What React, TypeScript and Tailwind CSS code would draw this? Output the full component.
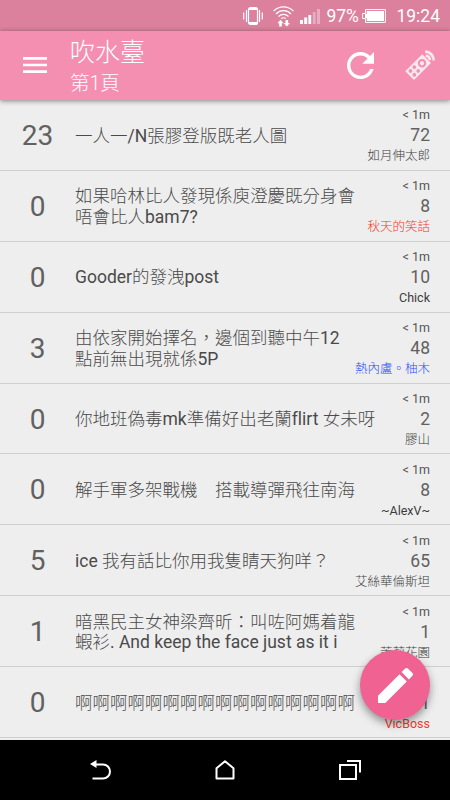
import React from 'react'

type Post = {
  score: number
  title: string[]
  replies: number
  author: string
  gender?: 'f' | 'm'
}

const posts: Post[] = [
  { score: 23, title: ['一人一/N張膠登版既老人圖'], replies: 72, author: '如月伸太郎' },
  { score: 0, title: ['如果哈林比人發現係庾澄慶既分身會', '唔會比人bam7?'], replies: 8, author: '秋天的笑話', gender: 'f' },
  { score: 0, title: ['Gooder的發洩post'], replies: 10, author: 'Chick' },
  { score: 3, title: ['由依家開始擇名，邊個到聽中午12', '點前無出現就係5P'], replies: 48, author: '熱內盧。柚木', gender: 'm' },
  { score: 0, title: ['你地班偽毒mk準備好出老蘭flirt 女未呀'], replies: 2, author: '膠山' },
  { score: 0, title: ['解手軍多架戰機　搭載導彈飛往南海'], replies: 8, author: '~AlexV~' },
  { score: 5, title: ['ice 我有話比你用我隻睛天狗咩？'], replies: 65, author: '艾絲華倫斯坦' },
  { score: 1, title: ['暗黑民主女神梁齊昕：叫咗阿媽着龍', '蝦衫. And keep the face just as it i'], replies: 1, author: '茉莉花園' },
  { score: 0, title: ['啊啊啊啊啊啊啊啊啊啊啊啊啊啊啊啊'], replies: 1, author: 'VicBoss', gender: 'f' },
]

const authorColor = (gender?: 'f' | 'm') => {
  if (gender === 'f') return 'text-[#f03a2c]'
  if (gender === 'm') return 'text-[#2f4fff]'
  return 'text-[#3c3c3c]'
}

const StatusBar = () => (
  <div className="flex h-[31px] shrink-0 items-center justify-end bg-[#db819e] pr-[10px] pt-px text-white">
    <svg className="mr-[10px] h-5 w-5" viewBox="0 0 20 20" fill="none" stroke="currentColor">
      <rect x="5.5" y="1.5" width="9" height="17" rx="2" strokeWidth="1.2" />
      <path d="M6 2.8h8M6 17h8" strokeWidth="2.2" />
      <path d="M3.5 4v12M16.500 4v12" strokeWidth="1.2" />
      <path d="M.7 6.5v7M19.3 6.5v7" strokeWidth="1.2" />
    </svg>
    <svg className="mr-[6px] h-[21px] w-[21px]" viewBox="0 0 21 21" fill="none" stroke="currentColor">
      <path d="M.6 5.2C6-.6 15-.6 20.4 5.2M3 8c4.2-4.4 10.8-4.4 15 0M5.500 10.500c2.900-2.800 7.100-2.800 10 0M8.200 12.600c1.500-1.100 3.100-1.100 4.600 0" strokeWidth="1.2" />
      <path d="M7.500 13.800l3.100 3.400H8.800v3.300H6.200v-3.300H4.400zM13.800 20.500l-3.100-3.400h1.800v-3h2.600v3h1.800z" fill="currentColor" stroke="none" />
    </svg>
    <svg className="mr-[6px] h-4 w-5" viewBox="0 0 20 16" fill="currentColor">
      <path d="M0 12h3v4H0zM4.200 9.500h3V16h-3zM8.400 7h2.800v9H8.400z" />
      <path d="M12.800 4h2.800v12h-2.800zM17 1h3v15h-3z" opacity=".35" />
    </svg>
    <span className="w-[32px] whitespace-nowrap text-[17.500px] leading-5">97%</span>
    <svg className="ml-[4px] mr-[10px] h-[14px] w-6" viewBox="0 0 24 14">
      <path d="M3.500.6H23.400v12.800H3.500V9.500H.6v-5h2.900z" fill="none" stroke="currentColor" strokeWidth="1" />
      <path d="M4.700 2h17.300v10H4.700V9H3V5h1.700z" fill="currentColor" />
    </svg>
    <span className="text-[17.500px] leading-5">19:24</span>
  </div>
)

const AppBar = () => (
  <header className="relative z-10 flex h-[69px] shrink-0 items-center bg-[#f48fb1] pl-[23px] pr-[14px] text-white shadow-[0_1px_5px_rgba(0,0,0,0.45)]">
    <svg className="mr-[23px] mb-[2px] h-4 w-6" viewBox="3 6 18 12" fill="currentColor">
      <path d="M3 18h18v-2H3v2zm0-5h18v-2H3v2zm0-7v2h18V6H3z" />
    </svg>
    <div className="flex-1 pt-[6px] font-light">
      <h1 className="text-[25px] leading-[30px]">吹水臺</h1>
      <p className="text-[19.500px] leading-[31px]">第1頁</p>
    </div>
    <svg className="mr-[31px] h-[27px] w-[27px]" viewBox="4 4 16 16" fill="currentColor">
      <path d="M17.650 6.350C16.200 4.900 14.210 4 12 4c-4.420 0-7.990 3.580-7.990 8s3.570 8 7.990 8c3.730 0 6.840-2.550 7.730-6h-2.080c-.820 2.330-3.040 4-5.650 4-3.310 0-6-2.690-6-6s2.690-6 6-6c1.660 0 3.140.690 4.220 1.780L13 11h7V4l-2.350 2.350z" />
    </svg>
    <svg className="h-[31px] w-[31px]" viewBox="0 0 31 31">
      <g transform="translate(.3 21.300) rotate(-45)">
        <rect width="24" height="12.300" fill="#fde8ef" />
        <g fill="#f48fb1">
          <circle cx="3.900" cy="3.400" r="1.850" />
          <circle cx="3.900" cy="8.900" r="1.850" />
          <circle cx="9.300" cy="3.400" r="1.850" />
          <circle cx="9.300" cy="8.900" r="1.850" />
          <circle cx="17.500" cy="6.150" r="4.200" />
        </g>
        <circle cx="17.500" cy="6.150" r="2.200" fill="#fde8ef" />
      </g>
      <path d="M20.700 5.600a5 5 0 0 1 4.300 4.600M20.200 1.600a8.800 8.800 0 0 1 8.600 8.800" fill="none" stroke="#fde8ef" strokeWidth="2.600" />
    </svg>
  </header>
)

const PostRow = ({ post }: { post: Post }) => (
  <li className="flex h-[70.900px] items-center border-b border-[#cfcfcf] pr-5 pt-[2px] text-[#616161]">
    <div className="w-[75px] shrink-0 text-center text-[28px] leading-8">{post.score}</div>
    <div className="min-w-0 flex-1 whitespace-nowrap text-[17.500px] leading-[20.500px] text-[#4a4a4a]">
      {post.title.map((line) => (
        <div key={line}>{line}</div>
      ))}
    </div>
    <div className="shrink-0 text-right">
      <div className="text-[12.500px] leading-5 text-[#555]">&lt; 1m</div>
      <div className="text-[17.500px] leading-[21px]">{post.replies}</div>
      <div className={`text-[12.500px] leading-5 ${authorColor(post.gender)}`}>{post.author}</div>
    </div>
  </li>
)

const NavBar = () => (
  <nav className="flex h-[60px] shrink-0 items-center justify-between bg-black pl-[90px] pr-[89px] text-white">
    <svg className="h-5 w-[21px]" viewBox="0 0 21 20" fill="none" stroke="currentColor" strokeWidth="2">
      <path d="M5 4.500h8a7 7 0 0 1 0 14H2.500" />
      <path d="M0 4L6.500 0v8z" fill="currentColor" stroke="none" />
    </svg>
    <svg className="h-5 w-5" viewBox="0 0 20 20" fill="none" stroke="currentColor" strokeWidth="2" strokeLinejoin="round">
      <path d="M1.500 18.500V8.200L10 1.300l8.500 6.900v10.300z" />
    </svg>
    <svg className="h-5 w-[22px]" viewBox="0 0 22 20" fill="none" stroke="currentColor" strokeWidth="2">
      <rect x="1" y="5" width="16" height="14" />
      <path d="M8 1h13v11.500" />
    </svg>
  </nav>
)

const App = () => {
  return (
    <div className="relative flex h-[800px] w-[450px] flex-col overflow-hidden bg-[#eee] font-[Roboto,'Noto_Sans_CJK_TC_Light','Noto_Sans_CJK_TC',sans-serif] [font-variant-ligatures:none]">
      <StatusBar />
      <AppBar />
      <ul className="min-h-0 flex-1 overflow-hidden">
        {posts.map((post) => (
          <PostRow key={post.title[0]} post={post} />
        ))}
      </ul>
      <NavBar />
      <button className="absolute bottom-[80px] right-5 flex h-[70px] w-[70px] items-center justify-center rounded-full bg-[#f06292] text-white shadow-[0_4px_9px_rgba(0,0,0,0.4)]">
        <svg className="h-[35px] w-[35px]" viewBox="3 3 18 18" fill="currentColor">
          <path d="M3 17.250V21h3.750L17.810 9.940l-3.750-3.750L3 17.250zM20.710 7.040c.390-.390.390-1.020 0-1.410l-2.340-2.340c-.390-.390-1.020-.390-1.410 0l-1.830 1.830 3.750 3.750 1.830-1.830z" />
        </svg>
      </button>
    </div>
  )
}

export default App
